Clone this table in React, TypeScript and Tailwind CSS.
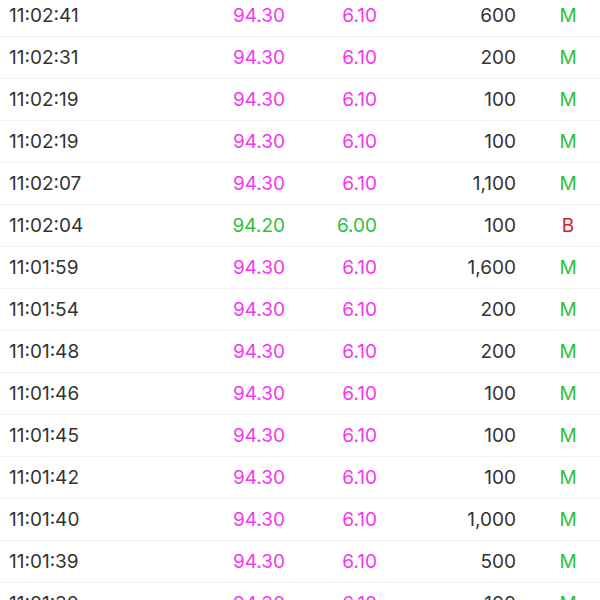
import React from 'react';

type Trade = {
  time: string;
  price: string;
  change: string;
  volume: string;
  side: 'M' | 'B';
};

const trades: Trade[] = [
  { time: '11:02:41', price: '94.30', change: '6.10', volume: '600', side: 'M' },
  { time: '11:02:31', price: '94.30', change: '6.10', volume: '200', side: 'M' },
  { time: '11:02:19', price: '94.30', change: '6.10', volume: '100', side: 'M' },
  { time: '11:02:19', price: '94.30', change: '6.10', volume: '100', side: 'M' },
  { time: '11:02:07', price: '94.30', change: '6.10', volume: '1,100', side: 'M' },
  { time: '11:02:04', price: '94.20', change: '6.00', volume: '100', side: 'B' },
  { time: '11:01:59', price: '94.30', change: '6.10', volume: '1,600', side: 'M' },
  { time: '11:01:54', price: '94.30', change: '6.10', volume: '200', side: 'M' },
  { time: '11:01:48', price: '94.30', change: '6.10', volume: '200', side: 'M' },
  { time: '11:01:46', price: '94.30', change: '6.10', volume: '100', side: 'M' },
  { time: '11:01:45', price: '94.30', change: '6.10', volume: '100', side: 'M' },
  { time: '11:01:42', price: '94.30', change: '6.10', volume: '100', side: 'M' },
  { time: '11:01:40', price: '94.30', change: '6.10', volume: '1,000', side: 'M' },
  { time: '11:01:39', price: '94.30', change: '6.10', volume: '500', side: 'M' },
  { time: '11:01:30', price: '94.30', change: '6.10', volume: '100', side: 'M' },
];

function TradeRow({ t }: { t: Trade }) {
  // the bid row is green, everything else traded at the ask
  const priceColor = t.side === 'B' ? 'text-[#2fbf3a]' : 'text-[#f536f0]';
  return (
    <div className="grid h-[42px] grid-cols-[200px_85px_92px_159px_64px] items-center border-b border-[#f2f2f2] pt-[2px] text-[19px]">
      <span className="pl-[9px] text-[#333333]">{t.time}</span>
      <span className={`text-right ${priceColor}`}>{t.price}</span>
      <span className={`text-right ${priceColor}`}>{t.change}</span>
      <span className="pr-[20px] text-right text-[#333333]">{t.volume}</span>
      <span className={`text-center ${t.side === 'B' ? 'text-[#d0202a]' : 'text-[#2fbf3a]'}`}>
        {t.side}
      </span>
    </div>
  );
}

export default function App() {
  return (
    <div className="h-[600px] w-[600px] overflow-hidden bg-white font-['Inter','Liberation_Sans',sans-serif]">
      <div className="-mt-[5px]">
        {trades.map((t, i) => (
          <TradeRow key={i} t={t} />
        ))}
      </div>
    </div>
  );
}
